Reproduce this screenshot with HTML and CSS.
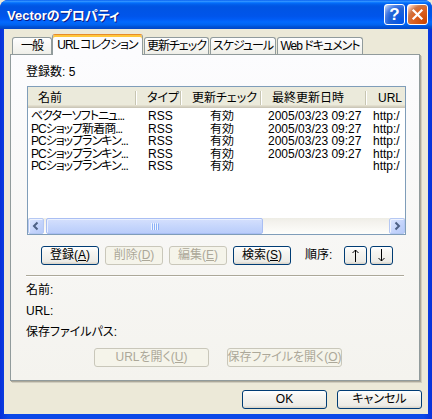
FILE: index.html
```html
<!DOCTYPE html>
<html lang="ja">
<head>
<meta charset="utf-8">
<title>Vectorのプロパティ</title>
<link rel="stylesheet" href="styles.css">
</head>
<body>
<div class="window">
  <div class="titlebar">
    <div class="title">Vectorのプロパティ</div>
    <div class="caption">
      <div class="cbtn help">?</div>
      <div class="cbtn close"><svg width="13" height="13" viewBox="0 0 13 13"><path d="M2.5 2.5L10.5 10.5M10.5 2.5L2.5 10.5" stroke="#fff" stroke-width="2.2" stroke-linecap="square"/></svg></div>
    </div>
  </div>
  <div class="frame">
    <div class="tabs">
      <div class="tab w1">一般</div>
      <div class="tab sel w2">URL コレクション</div>
      <div class="tab w3">更新チェック</div>
      <div class="tab w4">スケジュール</div>
      <div class="tab w5">Web ドキュメント</div>
    </div>
    <div class="panel">
      <div class="count">登録数: 5</div>
      <div class="listview">
        <div class="lv-head">
          <div class="hc k1">名前</div>
          <div class="hc k2">タイプ</div>
          <div class="hc k3">更新チェック</div>
          <div class="hc k4">最終更新日時</div>
          <div class="hc k5">URL</div>
        </div>
        <div class="lv-body">
          <div class="row"><span class="c k1 name">ベクターソフトニュ...</span><span class="c k2 type">RSS</span><span class="c k3 chk">有効</span><span class="c k4 date">2005/03/23 09:27</span><span class="c k5 url">http:/</span></div>
          <div class="row"><span class="c k1 name">PCショップ新着商...</span><span class="c k2 type">RSS</span><span class="c k3 chk">有効</span><span class="c k4 date">2005/03/23 09:27</span><span class="c k5 url">http:/</span></div>
          <div class="row"><span class="c k1 name">PCショップランキン...</span><span class="c k2 type">RSS</span><span class="c k3 chk">有効</span><span class="c k4 date">2005/03/23 09:27</span><span class="c k5 url">http:/</span></div>
          <div class="row"><span class="c k1 name">PCショップランキン...</span><span class="c k2 type">RSS</span><span class="c k3 chk">有効</span><span class="c k4 date">2005/03/23 09:27</span><span class="c k5 url">http:/</span></div>
          <div class="row"><span class="c k1 name">PCショップランキン...</span><span class="c k2 type">RSS</span><span class="c k3 chk">有効</span><span class="c k4 date"></span><span class="c k5 url">http:/</span></div>
        </div>
        <div class="hscroll">
          <div class="sbtn"><svg width="14" height="14" viewBox="0 0 14 14"><path d="M8.5 3.5L5 7L8.5 10.5" fill="none" stroke="#4d6185" stroke-width="2"/></svg></div>
          <div class="strack">
            <div class="thumb"><svg width="8" height="7" viewBox="0 0 8 7"><path d="M0.5 0V7M2.5 0V7M4.5 0V7M6.5 0V7" stroke="#eef4fe" stroke-width="1"/><path d="M1.5 0.5V7.5M3.5 0.5V7.5M5.5 0.5V7.5M7.5 0.5V7.5" stroke="#8cb0f8" stroke-width="1"/></svg></div>
          </div>
          <div class="sbtn"><svg width="14" height="14" viewBox="0 0 14 14"><path d="M5.5 3.5L9 7L5.5 10.5" fill="none" stroke="#4d6185" stroke-width="2"/></svg></div>
        </div>
      </div>
      <div class="btnrow">
        <button class="btn">登録(<u>A</u>)</button>
        <button class="btn dis">削除(<u>D</u>)</button>
        <button class="btn dis">編集(<u>E</u>)</button>
        <button class="btn">検索(<u>S</u>)</button>
        <span class="order-label">順序:</span>
        <button class="btn arrow" aria-label="上へ"><svg width="7" height="13" viewBox="0 0 7 13"><path d="M3.5 1V13M0.5 4L3.5 1L6.5 4" fill="none" stroke="#000" stroke-width="1"/></svg></button>
        <button class="btn arrow second" aria-label="下へ"><svg width="7" height="13" viewBox="0 0 7 13"><path d="M3.5 0V12M0.5 9L3.5 12L6.5 9" fill="none" stroke="#000" stroke-width="1"/></svg></button>
      </div>
      <div class="sep"></div>
      <div class="fields">
        <div class="field">名前:</div>
        <div class="field">URL:</div>
        <div class="field">保存ファイルパス:</div>
      </div>
      <div class="btnrow2">
        <button class="btn wide dis">URLを開く(<u>U</u>)</button>
        <button class="btn wide dis">保存ファイルを開く(<u>O</u>)</button>
      </div>
    </div>
    <div class="footer">
      <button class="btn big">OK</button>
      <button class="btn big">キャンセル</button>
    </div>
  </div>
</div>
</body>
</html>
```

FILE: styles.css
```css
* { box-sizing: border-box; }
html, body { margin: 0; padding: 0; }
body {
  width: 432px;
  height: 419px;
  overflow: hidden;
  background: #ece9d8;
  font-family: "Liberation Sans", "Noto Sans CJK JP", sans-serif;
  font-size: 12px;
  font-feature-settings: "palt" 1;
  color: #000;
}
.window {
  width: 432px;
  height: 419px;
  display: flex;
  flex-direction: column;
  background: linear-gradient(90deg, #0831d9, #0b48e8 2%, #0b48e8 98%, #0831d9);
  border-radius: 8px 8px 0 0;
  overflow: hidden;
}
.titlebar {
  flex: none;
  height: 29px;
  display: flex;
  align-items: flex-start;
  padding: 0 4px 0 7px;
  background: linear-gradient(180deg, #0058ee 0%, #3593ff 4%, #288eff 6%, #127dff 8%, #036ffc 10%, #0262ee 14%, #0057e5 20%, #0054e3 24%, #0055eb 56%, #005bf5 66%, #026afe 76%, #0062ef 86%, #0052d6 92%, #0046c8 100%);
}
.title {
  flex: 1;
  color: #fff;
  font-weight: bold;
  font-size: 13px;
  line-height: 16px;
  margin-top: 8px;
  text-shadow: 1px 1px 0 #0a1883;
  white-space: nowrap;
}
.caption { display: flex; gap: 2px; margin-top: 4px; }
.cbtn {
  width: 21px;
  height: 21px;
  border: 1px solid #fff;
  border-radius: 3px;
  display: flex;
  align-items: center;
  justify-content: center;
  color: #fff;
}
.help {
  background: radial-gradient(circle at 90% 90%, #0054e9 0%, #2263d5 55%, #4479e4 70%, #a3bbec 90%, #fff 100%);
  font-family: "Liberation Sans", sans-serif;
  font-weight: bold;
  font-size: 17px;
  line-height: 19px;
}
.close {
  background: radial-gradient(circle at 90% 90%, #cc4600 0%, #dc6527 55%, #cd7546 70%, #ffccb2 90%, #fff 100%);
}
.frame {
  flex: 1;
  margin: 0 4px 5px 4px;
  background: #ece9d8;
  padding: 5px 8px 0 6px;
  display: flex;
  flex-direction: column;
}
.tabs {
  flex: none;
  display: flex;
  align-items: flex-end;
  height: 20px;
  padding-left: 2px;
  position: relative;
  z-index: 1;
}
.tab {
  flex: none;
  height: 17px;
  border: 1px solid #919b9c;
  border-bottom: 0;
  border-radius: 3px 3px 0 0;
  background: linear-gradient(180deg, #fff, #fafaf9 26%, #f0f0ea 95%, #ecebe5);
  text-align: center;
  line-height: 16px;
  white-space: nowrap;
  letter-spacing: -1px;
  overflow: hidden;
  margin-left: 1px;
}
.w1 { width: 40px; margin-left: 0; }
.w2 { width: 91px; }
.w3 { width: 65px; }
.w4 { width: 66px; }
.w5 { width: 86px; }
.tab.sel {
  height: 21px;
  margin-bottom: -1px;
  margin-left: 0;
  background: #fcfcfe;
  border-top: 1px solid #e68b2c;
  box-shadow: inset 0 2px #ffc73c;
  padding-top: 2px;
}
.panel {
  flex: none;
  height: 327px;
  border: 1px solid #919b9c;
  background: linear-gradient(180deg, #fcfcfe, #f4f3ee);
  box-shadow: 1px 1px 0 #aca899, 2px 2px 0 #d0cdbf;
  padding: 0 13px 0 15px;
  display: flex;
  flex-direction: column;
}
.count { margin-top: 11px; line-height: 13px; }
.listview {
  flex: none;
  margin-top: 7px;
  margin-left: 1px;
  height: 149px;
  border: 1px solid #7f9db9;
  background: #fff;
  display: flex;
  flex-direction: column;
  overflow: hidden;
}
.lv-head {
  flex: none;
  height: 21px;
  display: flex;
  background: #ebeadb;
  box-shadow: inset 0 -1px #cbc7b8, inset 0 -2px #d6d2c2, inset 0 -3px #e2decd;
}
.hc {
  flex: none;
  height: 21px;
  line-height: 19px;
  padding-top: 2px;
  padding-left: 10px;
  white-space: nowrap;
  overflow: hidden;
  background:
    linear-gradient(#c7c5b2, #c7c5b2) right 1px top 4px / 1px 14px no-repeat,
    linear-gradient(#fff, #fff) right 0 top 4px / 1px 14px no-repeat;
}
.hc.k5 { padding-left: 11px; background: none; }
.k1 { width: 109px; }
.k2 { width: 45px; }
.k3 { width: 80px; }
.k4 { width: 105px; }
.k5 { width: 37px; }
.lv-body { flex: 1; padding-top: 2px; overflow: hidden; }
.row { display: flex; height: 12.5px; line-height: 12.5px; white-space: nowrap; }
.c { flex: none; overflow: hidden; }
.name { padding-left: 3px; letter-spacing: -1px; }
.type { padding-left: 11px; }
.chk { text-align: center; }
.date { padding-left: 6px; }
.url { padding-left: 6px; }
.hscroll {
  flex: none;
  height: 16px;
  display: flex;
  background: linear-gradient(180deg, #eeede5, #f3f1ec 20%, #fefefb);
}
.sbtn {
  flex: none;
  width: 16px;
  height: 16px;
  border: 1px solid #b5c8f3;
  border-radius: 2px;
  background: linear-gradient(135deg, #dde7fe, #c3d3fb 60%, #b6caf8);
  box-shadow: inset 1px 1px #eef3fe;
  display: flex;
  align-items: center;
  justify-content: center;
}
.strack { flex: 1; display: flex; }
.thumb {
  flex: none;
  margin-left: 2px;
  width: 217px;
  height: 16px;
  border: 1px solid #a9bef3;
  border-radius: 2px;
  background: linear-gradient(180deg, #d5e0fd, #c6d6fc 50%, #bacdfa);
  box-shadow: inset 1px 1px #e9f0fe;
  display: flex;
  align-items: center;
  justify-content: center;
}
.btn {
  flex: none;
  width: 58px;
  height: 19px;
  padding: 0;
  margin: 0;
  font: inherit;
  color: #000;
  border: 1px solid #003c74;
  border-radius: 3px;
  background: linear-gradient(180deg, #fff, #f6f5f1 30%, #ecebe6 86%, #d6d0c5);
  display: flex;
  align-items: center;
  justify-content: center;
  line-height: 17px;
  white-space: nowrap;
}
.btn.dis {
  border-color: #c9c7ba;
  color: #aca899;
  background: #f5f4ea;
}
.btnrow {
  flex: none;
  display: flex;
  align-items: center;
  gap: 6px;
  margin-top: 11px;
  height: 19px;
  padding-left: 15px;
}
.order-label { width: 33px; margin-left: 8px; line-height: 19px; }
.btn.arrow { width: 23px; }
.btn.second { margin-left: -3px; }
.sep {
  flex: none;
  margin-top: 10px;
  margin-right: 2px;
  height: 2px;
  border-top: 1px solid #aca899;
  border-bottom: 1px solid #fff;
}
.fields { margin-top: 3px; }
.field { height: 21px; line-height: 21px; }
.btnrow2 {
  flex: none;
  display: flex;
  gap: 18px;
  margin-top: 5px;
  padding-left: 68px;
}
.btn.wide { width: 115px; }
.footer {
  flex: none;
  display: flex;
  justify-content: flex-end;
  gap: 10px;
  margin-top: 9px;
  margin-right: -2px;
}
.btn.big { width: 85px; }
```
